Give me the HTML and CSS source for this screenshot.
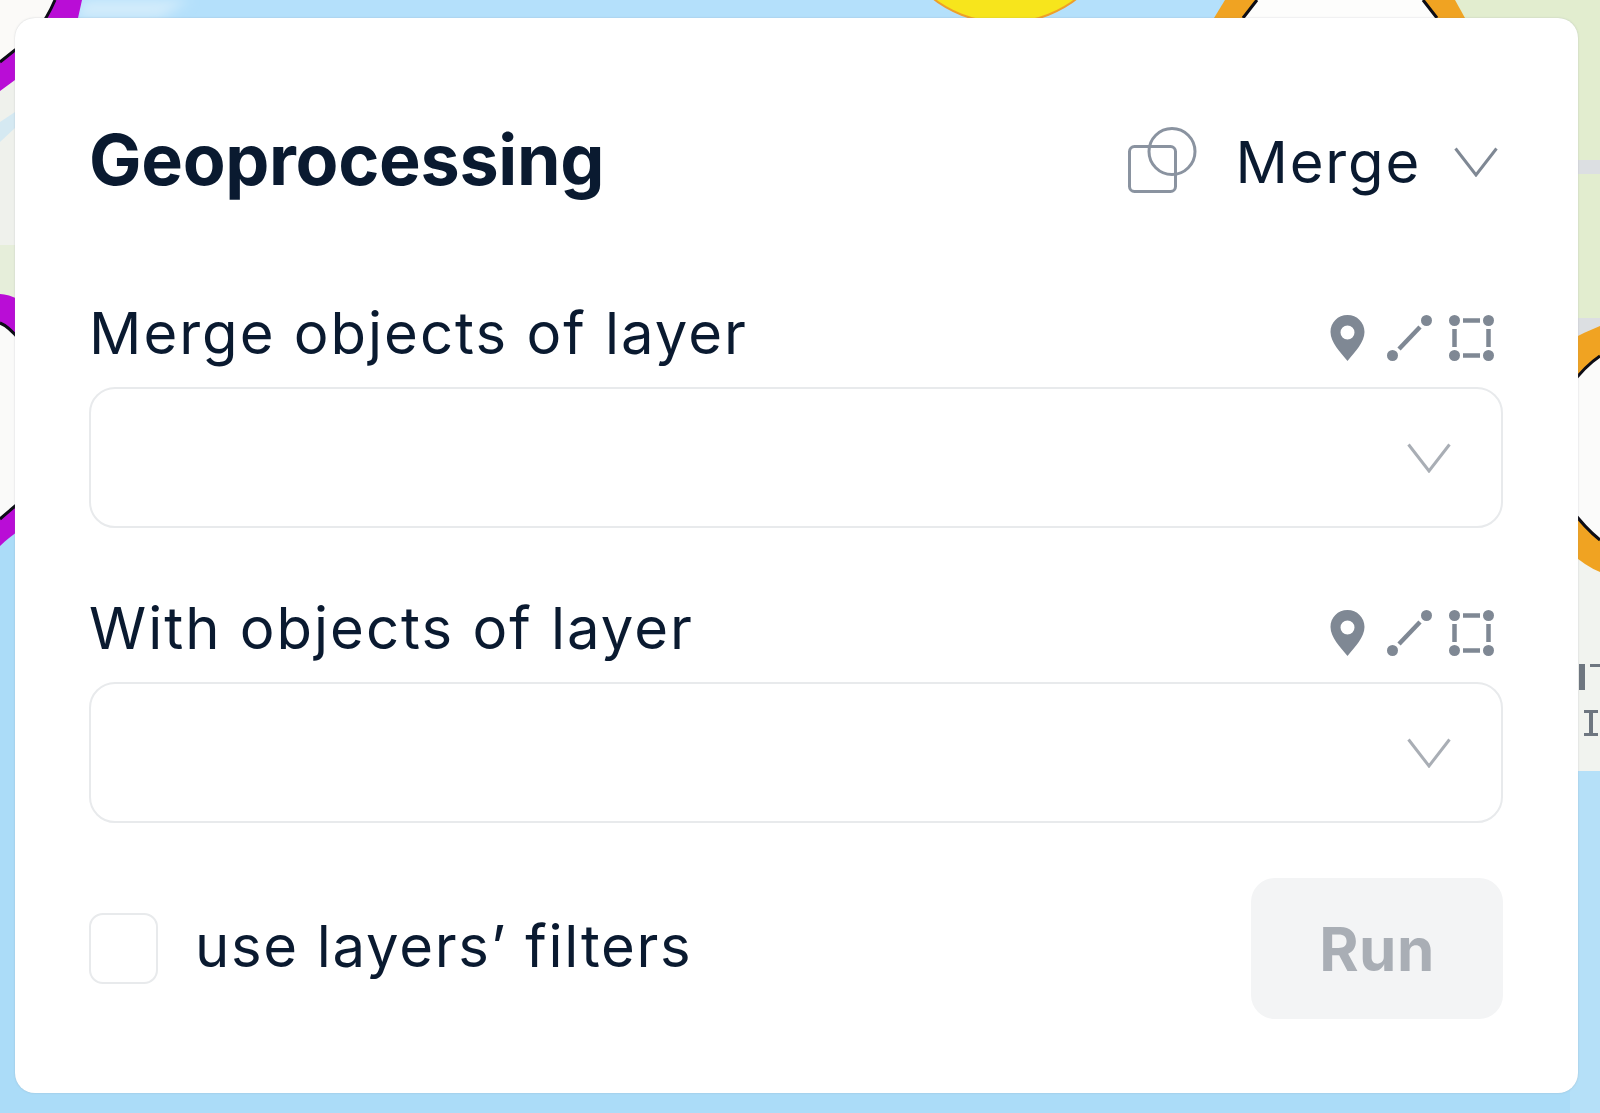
FILE: index.html
```html
<!DOCTYPE html>
<html lang="en">
<head>
    <meta charset="UTF-8">
    <meta name="viewport" content="width=device-width, initial-scale=1.0">
    <title>Geoprocessing</title>
    <link rel="stylesheet" href="styles.css">
</head>
<body>
    <!-- Map behind the panel -->
    <svg class="map" viewBox="0 0 1600 1113" aria-hidden="true">
        <defs>
            <filter id="soft"><feGaussianBlur stdDeviation="6"/></filter>
            <filter id="edge"><feGaussianBlur stdDeviation="0.7"/></filter>
        </defs>
        <rect width="1600" height="1113" fill="#abdcf8"/>
        <g filter="url(#edge)">
            <rect x="80" y="0" width="1140" height="18" fill="#b4e0fb"/>
            <path d="M84 0H190L160 18H76Z" fill="#d3ecfb" filter="url(#soft)"/>
            <!-- land on the left -->
            <rect x="0" y="60" width="20" height="250" fill="#eff1ec"/>
            <path d="M0 122L15 112V128L0 142Z" fill="#d5e9f2"/>
            <rect x="0" y="245" width="15" height="55" fill="#e6eeda"/>
            <!-- land on the right -->
            <rect x="1450" y="0" width="150" height="345" fill="#e2edcf"/>
            <rect x="1570" y="160" width="30" height="14" fill="#dcdfe2"/>
            <rect x="1570" y="318" width="30" height="20" fill="#dcdfe2"/>
            <rect x="1570" y="555" width="30" height="218" fill="#f1f3ef"/>
            <!-- purple rings -->
            <path d="M0 0H55Q40 35 15 50L0 62Z" fill="#fbfaf8"/>
            <path d="M55 0H82L78 18Q50 60 15 80L0 91V62L15 50Q40 35 55 0Z" fill="#b90ad6"/>
            <path d="M55 0Q40 35 15 50L0 62" fill="none" stroke="#0c0c14" stroke-width="3"/>
            <path d="M0 323Q8 326 20 340V502Q8 512 0 519Z" fill="#fafaf9"/>
            <path d="M0 294Q8 294 20 300V340Q8 326 0 323Z" fill="#b90ad6"/>
            <path d="M0 519Q8 512 20 502V530Q8 538 0 546Z" fill="#b90ad6"/>
            <path d="M0 323Q8 326 20 340M0 519Q8 512 20 502" fill="none" stroke="#0c0c14" stroke-width="3"/>
            <!-- yellow circle -->
            <circle cx="1005" cy="-95" r="118" fill="#f7e51b" stroke="#ee9f2c" stroke-width="2"/>
            <!-- orange ring on top -->
            <path d="M1225 0H1455L1465 18H1214Z" fill="#f0a321"/>
            <path d="M1257 0H1423L1437 18H1243Z" fill="#fdfdfc"/>
            <path d="M1257 0L1243 18M1423 0L1437 18" fill="none" stroke="#0c0c14" stroke-width="3"/>
            <!-- orange ring on the right -->
            <path d="M1570 340Q1585 332 1600 326V572Q1585 566 1570 552Z" fill="#f0a321"/>
            <path d="M1570 386Q1585 366 1600 356V540Q1585 528 1570 508Z" fill="#fbfbfa"/>
            <path d="M1570 386Q1585 366 1600 356M1570 508Q1585 528 1600 540" fill="none" stroke="#0c0c14" stroke-width="3"/>
            <!-- bits of map labels -->
            <path d="M1579 664H1585V690H1579ZM1590 664H1600V667H1590ZM1584 710H1598V713H1593V733H1598V736H1584V733H1589V713H1584Z" fill="#6e7680"/>
            <rect x="1570" y="771" width="30" height="342" fill="#b5e0f8"/>
        </g>
    </svg>

    <section class="panel">
        <header class="panel-header">
            <h1>Geoprocessing</h1>
            <div class="mode-select">
                <svg class="mode-icon" viewBox="0 0 67 66" aria-hidden="true">
                    <rect x="1.500" y="19.500" width="46" height="45" rx="5"/>
                    <circle cx="44" cy="24.500" r="23"/>
                </svg>
                <span>Merge</span>
                <svg class="chevron" viewBox="0 0 44 30" aria-hidden="true"><path d="M1.500 1.500L22 28L42.500 1.500"/></svg>
            </div>
        </header>

        <div class="field">
            <div class="field-label">
                <label>Merge objects of layer</label>
                <div class="geom-icons">
                    <svg class="geom-icon" viewBox="0 0 45 46" aria-hidden="true"><path fill-rule="evenodd" d="M22.500 0C12.900 0 5.500 7.500 5.500 17C5.500 27 15 37 22.500 46C30 37 39.500 27 39.500 17C39.500 7.500 32 0 22.500 0ZM22.500 10.500A7 7 0 1 1 22.500 24.500A7 7 0 1 1 22.500 10.500Z"/></svg>
                    <svg class="geom-icon" viewBox="0 0 45 46" aria-hidden="true"><circle cx="5.500" cy="40.500" r="5.500"/><circle cx="39.500" cy="5.500" r="5.500"/><path class="dash" d="M12 34L33 12"/></svg>
                    <svg class="geom-icon" viewBox="0 0 45 46" aria-hidden="true"><circle cx="5.500" cy="5.500" r="5.500"/><circle cx="39.500" cy="5.500" r="5.500"/><circle cx="5.500" cy="40.500" r="5.500"/><circle cx="39.500" cy="40.500" r="5.500"/><path class="dash" d="M14 5.500H31M14 40.500H31M5.500 14V32M39.500 14V32"/></svg>
                </div>
            </div>
            <div class="select-box">
                <svg class="chevron chevron-muted" viewBox="0 0 44 30" aria-hidden="true"><path d="M1.500 1.500L22 28L42.500 1.500"/></svg>
            </div>
        </div>

        <div class="field">
            <div class="field-label">
                <label>With objects of layer</label>
                <div class="geom-icons">
                    <svg class="geom-icon" viewBox="0 0 45 46" aria-hidden="true"><path fill-rule="evenodd" d="M22.500 0C12.900 0 5.500 7.500 5.500 17C5.500 27 15 37 22.500 46C30 37 39.500 27 39.500 17C39.500 7.500 32 0 22.500 0ZM22.500 10.500A7 7 0 1 1 22.500 24.500A7 7 0 1 1 22.500 10.500Z"/></svg>
                    <svg class="geom-icon" viewBox="0 0 45 46" aria-hidden="true"><circle cx="5.500" cy="40.500" r="5.500"/><circle cx="39.500" cy="5.500" r="5.500"/><path class="dash" d="M12 34L33 12"/></svg>
                    <svg class="geom-icon" viewBox="0 0 45 46" aria-hidden="true"><circle cx="5.500" cy="5.500" r="5.500"/><circle cx="39.500" cy="5.500" r="5.500"/><circle cx="5.500" cy="40.500" r="5.500"/><circle cx="39.500" cy="40.500" r="5.500"/><path class="dash" d="M14 5.500H31M14 40.500H31M5.500 14V32M39.500 14V32"/></svg>
                </div>
            </div>
            <div class="select-box">
                <svg class="chevron chevron-muted" viewBox="0 0 44 30" aria-hidden="true"><path d="M1.500 1.500L22 28L42.500 1.500"/></svg>
            </div>
        </div>

        <footer class="panel-footer">
            <label class="check">
                <span class="check-box"></span>
                <span class="check-text">use layers’ filters</span>
            </label>
            <button class="run-btn" disabled>Run</button>
        </footer>
    </section>
</body>
</html>
```

FILE: styles.css
```css
html, body {
    margin: 0;
    padding: 0;
    height: 100%;
}

body {
    font-family: Inter, "Noto Sans", sans-serif;
    color: #0a1a30;
    overflow: hidden;
    box-sizing: border-box;
    padding: 18px 22px 20px 15px;
}

/* Map */
.map {
    position: absolute;
    left: 0;
    top: 0;
    width: 1600px;
    height: 1113px;
}

/* Panel */
.panel {
    position: relative;
    height: 100%;
    box-sizing: border-box;
    padding: 104px 75px 0 74px;
    background-color: #fff;
    border-radius: 20px;
    box-shadow: 0 0 2px rgba(120, 130, 140, 0.35);
}

.panel-header {
    display: flex;
    justify-content: space-between;
    align-items: center;
    height: 76px;
    margin-bottom: 105px;
}

.panel-header h1 {
    margin: 0;
    font-size: 70px;
    font-weight: 700;
    line-height: 76px;
    letter-spacing: -0.300px;
}

.mode-select {
    display: flex;
    align-items: center;
    font-size: 58px;
    line-height: 76px;
    letter-spacing: 1.800px;
}

.mode-select span {
    padding-top: 4px;
}

.mode-icon {
    width: 67px;
    height: 66px;
    margin-right: 41px;
    overflow: visible;
    fill: none;
    stroke: #8a93a0;
    stroke-width: 3;
}

.chevron {
    width: 44px;
    height: 30px;
    fill: none;
    stroke: #7f8894;
    stroke-width: 3;
}

.mode-select .chevron {
    margin-top: 4px;
    margin-left: 33px;
    margin-right: 5px;
}

.chevron-muted {
    stroke: #a9aeb5;
}

/* Fields */
.field {
    margin-bottom: 70px;
}

.field:last-of-type {
    margin-bottom: 55px;
}

.field-label {
    display: flex;
    justify-content: space-between;
    align-items: center;
    height: 60px;
    margin-bottom: 24px;
    font-size: 58px;
    letter-spacing: 2px;
}

.geom-icons {
    display: flex;
    gap: 17px;
    margin-top: 10px;
    margin-right: 9px;
}

.geom-icon {
    width: 45px;
    height: 46px;
    fill: #7f8894;
}

.geom-icon .dash {
    fill: none;
    stroke: #7f8894;
    stroke-width: 4.500;
}

.select-box {
    display: flex;
    justify-content: flex-end;
    align-items: center;
    box-sizing: border-box;
    height: 141px;
    padding-right: 50px;
    border: 2px solid #e8eaec;
    border-radius: 26px;
}

/* Footer */
.panel-footer {
    display: flex;
    justify-content: space-between;
    align-items: center;
}

.check {
    display: flex;
    align-items: center;
    gap: 37px;
    font-size: 58px;
    letter-spacing: 1.700px;
}

.check-text {
    padding-bottom: 5px;
}

.check-box {
    box-sizing: border-box;
    width: 69px;
    height: 71px;
    border: 2px solid #e8eaec;
    border-radius: 14px;
}

.run-btn {
    width: 252px;
    height: 141px;
    border: none;
    border-radius: 24px;
    background-color: #f3f4f5;
    color: #a9aeb5;
    font-family: inherit;
    font-size: 60px;
    font-weight: 700;
    letter-spacing: 0.500px;
}
```
